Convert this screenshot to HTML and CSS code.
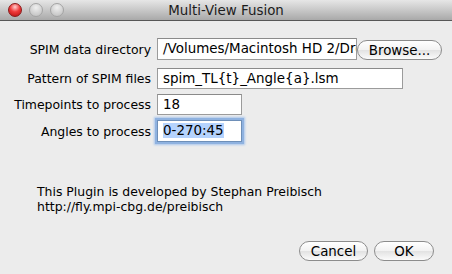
FILE: index.html
```html
<!DOCTYPE html>
<html lang="en">
<head>
  <meta charset="UTF-8">
  <meta name="viewport" content="width=device-width, initial-scale=1.0">
  <title>Multi-View Fusion</title>
  <link rel="stylesheet" href="styles.css">
</head>
<body>
  <div class="window">
    <div class="title-bar">
      <div class="lights">
        <span class="light red"></span>
        <span class="light"></span>
        <span class="light"></span>
      </div>
      <span class="title">Multi-View Fusion</span>
    </div>

    <div class="content">
      <div class="form">
        <label class="row1">SPIM data directory</label>
        <div class="field-line row1">
          <div class="field dir">/Volumes/Macintosh HD 2/Dro</div>
          <div class="button browse">Browse...</div>
        </div>

        <label class="row2">Pattern of SPIM files</label>
        <div class="field-line row2">
          <div class="field pattern">spim_TL{t}_Angle{a}.lsm</div>
        </div>

        <label class="row3">Timepoints to process</label>
        <div class="field-line row3">
          <div class="field small">18</div>
        </div>

        <label class="row4">Angles to process</label>
        <div class="field-line row4">
          <div class="field small focused"><span class="selected">0-270:45</span></div>
        </div>
      </div>

      <div class="info">
        This Plugin is developed by Stephan Preibisch<br>
        http://fly.mpi-cbg.de/preibisch
      </div>

      <div class="buttons">
        <div class="button cancel">Cancel</div>
        <div class="button ok">OK</div>
      </div>
    </div>
  </div>
</body>
</html>
```

FILE: styles.css
```css
    body {
      margin: 0;
      background-color: #ececec;
      font-family: "DejaVu Sans", Verdana, sans-serif;
      font-size: 12.45px;
      color: #000;
    }

    .window {
      width: 452px;
      height: 274px;
      display: flex;
      flex-direction: column;
      background-color: #ececec;
    }

    .title-bar {
      height: 20px;
      border-bottom: 1px solid #575757;
      background: linear-gradient(#e6e6e6, #c8c8c8 50%, #a9a9a9);
      display: flex;
      align-items: center;
      position: relative;
    }

    .lights {
      display: flex;
      gap: 7px;
      padding-left: 8px;
    }

    .light {
      width: 14px;
      height: 14px;
      border-radius: 50%;
      box-sizing: border-box;
      border: 1px solid #a4a4a4;
      background: radial-gradient(circle at 50% 30%, #f0f0f0, #d2d2d2 55%, #bcbcbc);
    }

    .light.red {
      border-color: #8a1a1a;
      background: radial-gradient(circle at 50% 25%, #ffd0d0, #f03a3a 45%, #b40e0e);
    }

    .title {
      position: absolute;
      left: 0;
      right: 0;
      text-align: center;
      font-size: 13.4px;
      color: #1c1c1c;
    }

    .content {
      flex-grow: 1;
      display: flex;
      flex-direction: column;
    }

    .form {
      display: grid;
      grid-template-columns: 151px auto;
      column-gap: 6px;
      padding-top: 17px;
    }

    .form label {
      text-align: right;
      align-self: center;
    }

    .field-line {
      display: flex;
      align-items: center;
    }

    .row2 { margin-top: 8px; }
    .row3 { margin-top: 5px; }
    .row4 { margin-top: 5px; }

    .field {
      height: 21px;
      box-sizing: border-box;
      background-color: #fff;
      border: 1px solid #9b9b9b;
      border-top-color: #8a8a8a;
      padding: 2px 5px;
      line-height: 16px;
      font-size: 13.45px;
      white-space: nowrap;
      overflow: hidden;
    }

    .dir {
      width: 200px;
      height: 22px;
    }

    .pattern {
      width: 246px;
    }

    .small {
      width: 85px;
    }

    .focused {
      height: 22px;
      border: 1px solid #6e8fb8;
      box-shadow: 0 0 0 2px #8fb2e0, 0 0 2px 3px #aac6ec;
    }

    .selected {
      background-color: #b5d3fd;
    }

    .button {
      height: 20px;
      box-sizing: border-box;
      border: 1px solid #8c8c8c;
      border-radius: 10px;
      background: linear-gradient(#ffffff, #f2f2f2 50%, #e2e2e2 51%, #fbfbfb);
      display: flex;
      align-items: center;
      justify-content: center;
      font-size: 13.4px;
    }

    .browse {
      width: 85px;
      margin-top: 2px;
    }

    .info {
      margin-top: 42px;
      padding-left: 37px;
      line-height: 15px;
    }

    .buttons {
      display: flex;
      justify-content: flex-end;
      gap: 6px;
      padding-right: 18px;
      margin-top: 27px;
    }

    .cancel {
      width: 69px;
    }

    .ok {
      width: 60px;
    }
```
